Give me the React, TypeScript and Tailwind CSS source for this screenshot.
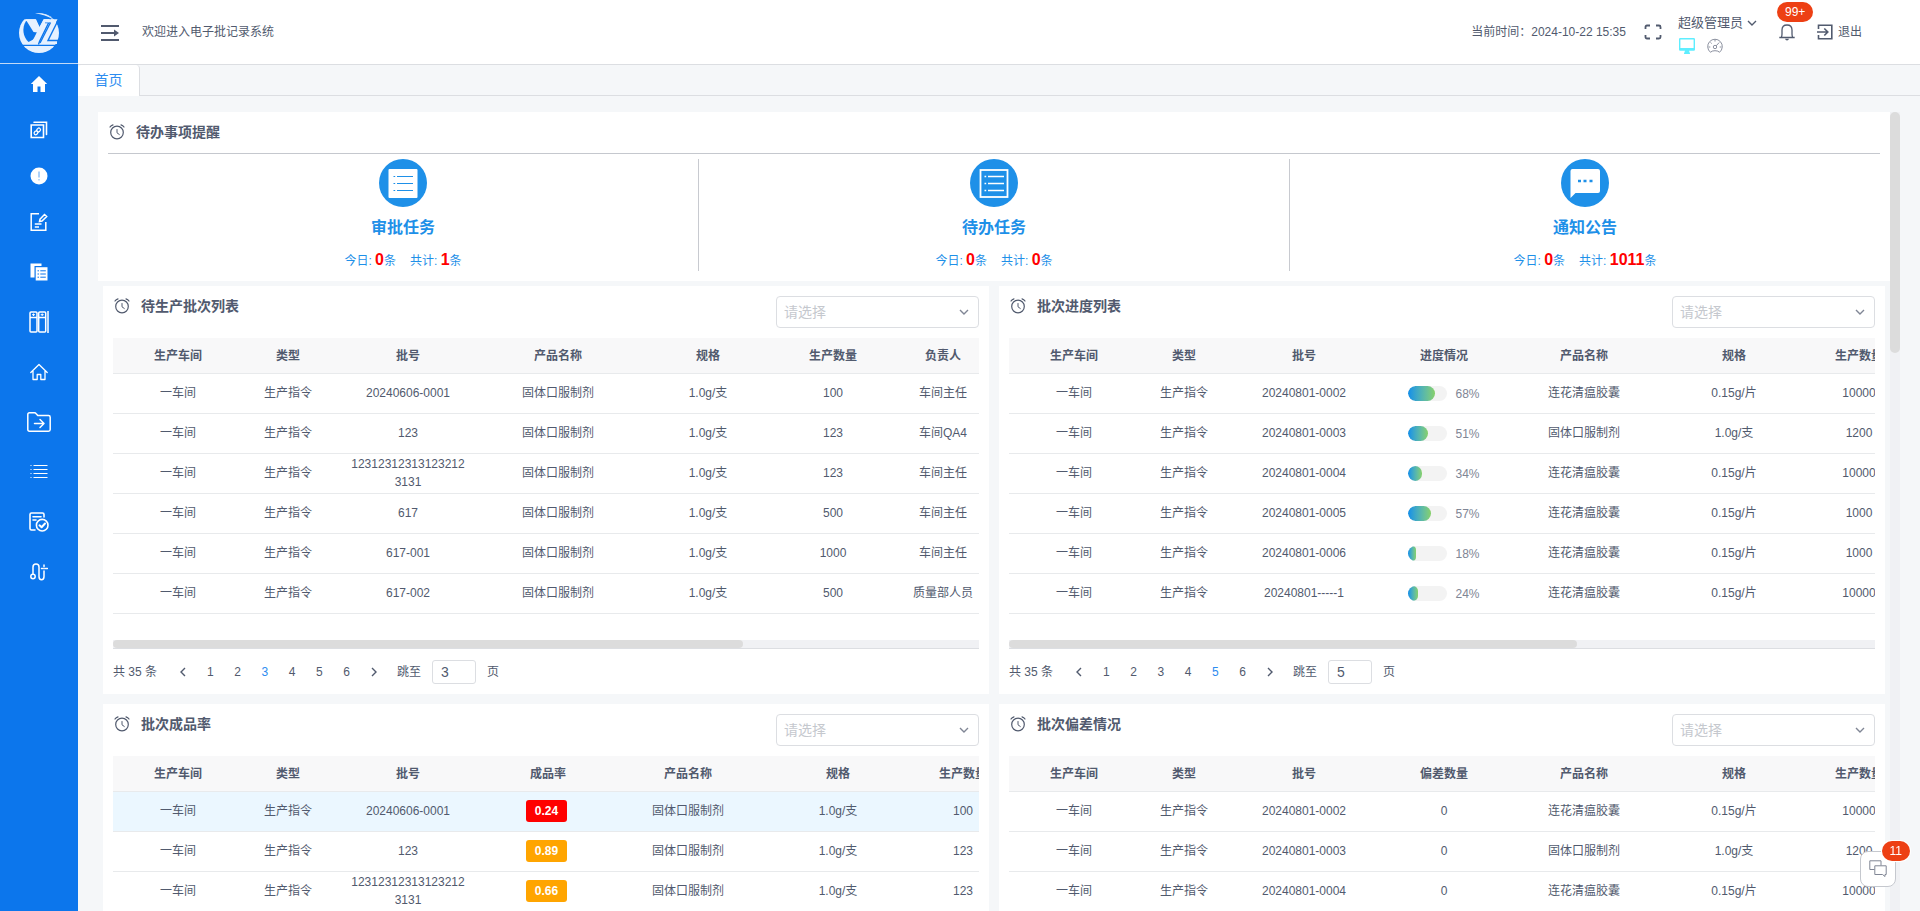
import type { ReactNode } from "react";

type Column = { title: string; width: string };

const W90 = "w-[90px]";
const W100 = "w-[100px]";
const W120 = "w-[120px]";
const W130 = "w-[130px]";
const W150 = "w-[150px]";

/* ---------- icons ---------- */

function Logo() {
  return (
    <svg viewBox="0 0 40 40" className="size-10" aria-hidden="true">
      <circle cx="20" cy="20" r="20" fill="#e6f1ff" />
      <path d="M4 6.300L9 0H16C25 1 32 3.500 35 6.300H25L20.500 14L17 6.300Z" fill="#0c76ec" />
      <path d="M7 8C2.500 15 4 24 9.500 29L15.500 26L18.500 19L12 8.500Z" fill="#0c76ec" />
      <path d="M6.500 6.300H16.500L20.500 14.500L18.500 19.500L14.500 19Z" fill="#e6f1ff" />
      <path d="M24.500 6.300H31L20.500 27.500C19 30.300 17 31 14 31H5C11 30 13.500 28 15.500 24Z" fill="#e6f1ff" />
      <path d="M26 9.500H31M31.500 6L20.500 28.500L19.500 31.500" stroke="#0c76ec" strokeWidth="1.400" fill="none" />
      <path d="M25 6.300H38.500L27.500 28H38V31H21.500L32 9.500H26Z" fill="#e6f1ff" />
      <path d="M39 7.500L29 27.500H39" stroke="#0c76ec" strokeWidth="1.400" fill="none" />
      <path d="M31.500 9.500L21 30" stroke="#0c76ec" strokeWidth="1.400" fill="none" />
      <path d="M3 32.300H37" stroke="#0c76ec" strokeWidth="1.300" fill="none" />
      <path d="M16 .3C24-.2 32 2.500 36.500 8.500L34 6.500C29 3 23 1.300 16 .3Z" fill="#e6f1ff" />
    </svg>
  );
}

function Line({ children, size = "size-[18px]", width = 1.2 }: { children: ReactNode; size?: string; width?: number }) {
  return (
    <svg
      viewBox="0 0 18 18"
      className={size}
      fill="none"
      stroke="currentColor"
      strokeWidth={width}
      strokeLinecap="round"
      strokeLinejoin="round"
      aria-hidden="true"
    >
      {children}
    </svg>
  );
}

const HomeSolid = () => (
  <svg viewBox="0 0 18 18" className="size-[18px]" fill="currentColor" aria-hidden="true">
    <path d="M9 1L.8 9H3V17H7.500V11.500H10.500V17H15V9H17.200Z" />
  </svg>
);
const LinkedPages = () => (
  <Line width={1.6}>
    <path d="M1.200 4H13.500V16.500H1.200ZM4 1.200H16.500V13.500" strokeLinejoin="miter" />
    <rect x="-2.900" y="-1.600" width="4.200" height="3.200" rx="1.600" transform="translate(6.600 11.200) rotate(-45)" strokeWidth="1.200" />
    <rect x="-1.300" y="-1.600" width="4.200" height="3.200" rx="1.600" transform="translate(8 9.600) rotate(-45)" strokeWidth="1.200" />
  </Line>
);
const AlertSolid = () => (
  <svg viewBox="0 0 18 18" className="size-[18px]" aria-hidden="true">
    <circle cx="9" cy="9" r="8.500" fill="currentColor" />
    <path d="M9 4.500V10.500M9 12.200V13.400" stroke="#5aa2f3" strokeWidth="1" />
  </svg>
);
const EditPage = () => (
  <Line width={1.5}>
    <path d="M9 .8H1.200V17.200H15.800V9M9.500 8.500L10 6.200L14.500 1.500L16.700 3.500L12 8L9.500 8.500ZM4.800 11H11.500M4.800 14H9" strokeLinecap="butt" strokeLinejoin="miter" />
  </Line>
);
const CopyList = () => (
  <svg viewBox="0 0 18 18" className="size-[18px]" aria-hidden="true">
    <path d="M.5 .5H11.500V3H4.500V14.500H.5Z" fill="currentColor" />
    <path d="M5.700 4.200H17.500V17.500H5.700Z" fill="currentColor" />
    <path d="M7.500 7.800H9M10.300 7.800H15.800M7.500 11H9M10.300 11H15.800M7.500 14.200H9M10.300 14.200H15.800" stroke="#0c76ec" />
  </svg>
);
const Binders = () => (
  <svg viewBox="0 0 20 22" className="h-[22px] w-5" fill="none" stroke="currentColor" strokeWidth="1.500" aria-hidden="true">
    <rect x="1" y="1" width="7" height="20" rx="1" />
    <rect x="9.700" y="1" width="7" height="20" rx="1" />
    <path d="M19 0V22M1 6.500H8M9.700 6.500H16.700" />
    <path d="M3 3.700H6M11.700 3.700H14.700M4.500 2.500V5M13.200 2.500V5" strokeWidth="1" />
  </svg>
);
const HomeLine = () => (
  <Line width={1.3}>
    <path d="M.8 9.500L9 1.500L17.200 9.500M3 8V16.500H7.200V11.500H10.800V16.500H15V8" />
  </Line>
);
const FolderArrow = () => (
  <svg viewBox="0 0 24 20" className="h-5 w-6" fill="none" stroke="currentColor" strokeWidth="1.500" strokeLinecap="round" strokeLinejoin="round" aria-hidden="true">
    <path d="M2.500 .8H7.500Q8.500 .8 9.200 1.700L10.800 3.600H21.500Q23.200 3.600 23.200 5.300V17.500Q23.200 19.200 21.500 19.200H2.500Q.8 19.200 .8 17.500V2.500Q.8 .8 2.500 .8Z" />
    <path d="M7.500 11.500H17M13 7.500L17 11.500L13 15.500" />
  </svg>
);
const Lines = () => (
  <Line width={1}>
    <path d="M.5 2.500H1.500M3.500 2.500H17.500M.5 6.500H1.500M3.500 6.500H17.500M.5 10.500H1.500M3.500 10.500H17.500M.5 14.500H1.500M3.500 14.500H17.500" strokeLinecap="butt" />
  </Line>
);
const CheckedForm = () => (
  <svg viewBox="0 0 20 20" className="size-5" fill="none" stroke="currentColor" strokeWidth="1.600" strokeLinecap="round" strokeLinejoin="round" aria-hidden="true">
    <path d="M6 18H2.500Q1 18 1 16.500V2.500Q1 1 2.500 1H13.500Q15 1 15 2.500V5M4 4.700H12M4 8H7" />
    <circle cx="13.200" cy="13.200" r="5.800" />
    <path d="M10.500 13.300L12.600 15.200L16 11.500" strokeWidth="2" />
  </svg>
);
const Route = () => (
  <Line width={1.5}>
    <circle cx="3" cy="13.500" r="2.200" />
    <path d="M3 11.200V4Q3 1 6 1Q9 1 9 4V13.500Q9 16.700 11.500 16.700Q14 16.700 14 13.500V8M11.500 5.500H12.500M15.500 5.500H17.500M14 2V3.500M14 5.200V5.800" />
  </Line>
);

const ClockIcon = () => (
  <svg viewBox="0 0 16 16" className="size-4 text-[#515a6e]" fill="none" stroke="currentColor" strokeWidth="1.200" strokeLinecap="round" aria-hidden="true">
    <circle cx="8" cy="8.500" r="6.300" />
    <path d="M8 5.500V8.800L10.300 10.500" strokeWidth="1" />
    <path d="M1 3Q2 1.300 4 .8M15 3Q14 1.300 12 .8" />
  </svg>
);
const Chevron = ({ className }: { className: string }) => (
  <svg viewBox="0 0 10 10" className={className} fill="none" stroke="currentColor" strokeWidth="1.400" aria-hidden="true">
    <path d="M1 3L5 7L9 3" />
  </svg>
);

/* ---------- shell ---------- */

const navTop = [
  { label: "首页", icon: <HomeSolid /> },
  { label: "关联文档", icon: <LinkedPages /> },
  { label: "预警", icon: <AlertSolid /> },
  { label: "编辑", icon: <EditPage /> },
];
const navBottom = [
  { label: "记录", icon: <CopyList /> },
  { label: "档案", icon: <Binders /> },
  { label: "车间", icon: <HomeLine /> },
  { label: "归档", icon: <FolderArrow /> },
  { label: "列表", icon: <Lines /> },
  { label: "审核", icon: <CheckedForm /> },
  { label: "流程", icon: <Route /> },
];

function NavItem({ label, icon }: { label: string; icon: ReactNode }) {
  return (
    <a href="#" aria-label={label} className="flex h-6 w-full items-center justify-center text-white">
      {icon}
    </a>
  );
}

function Sidebar() {
  return (
    <aside className="flex w-[78px] shrink-0 flex-col bg-[#0c76ec]">
      <div className="flex h-16 shrink-0 items-center justify-center border-b border-[#c3daf7] pt-[3px]">
        <Logo />
      </div>
      <nav className="flex flex-col gap-[26px] pt-2">
        <div className="flex flex-col gap-[22px]">
          {navTop.map((n) => (
            <NavItem key={n.label} {...n} />
          ))}
        </div>
        {navBottom.map((n) => (
          <NavItem key={n.label} {...n} />
        ))}
      </nav>
    </aside>
  );
}

function Header() {
  return (
    <header className="flex h-[65px] shrink-0 items-center border-b border-[#dcdee2] bg-white pr-[58px] pl-[23px]">
      <button type="button" aria-label="展开菜单" className="pt-[2px] text-[#515a6e]">
        <svg viewBox="0 0 18 16" className="h-4 w-[18px]" fill="none" stroke="currentColor" strokeWidth="2" aria-hidden="true">
          <path d="M0 1H18M0 8H14M0 15H18" />
          <path d="M13 4.500L18 8L13 11.500Z" fill="currentColor" stroke="none" />
        </svg>
      </button>
      <span className="ml-[23px] text-xs">欢迎进入电子批记录系统</span>
      <span className="ml-auto text-xs">当前时间：2024-10-22 15:35</span>
      <button type="button" aria-label="全屏" className="ml-[18px]">
        <svg viewBox="0 0 18 16" className="h-4 w-[18px]" fill="none" stroke="currentColor" strokeWidth="1.800" aria-hidden="true">
          <path d="M1.500 5V3Q1.500 1.500 3 1.500H6M12 1.500H15Q16.500 1.500 16.500 3V5M16.500 11V13Q16.500 14.500 15 14.500H12M6 14.500H3Q1.500 14.500 1.500 13V11" />
        </svg>
      </button>
      <div className="ml-4 flex flex-col gap-[3px] pt-[5px]">
        <button type="button" className="flex h-5 items-center gap-1 text-[13px]">
          超级管理员
          <Chevron className="size-[10px]" />
        </button>
        <div className="flex h-5 items-center gap-3 pl-px">
          <svg viewBox="0 0 16 16" className="size-4" aria-hidden="true">
            <path fillRule="evenodd" d="M1.200 0H14.800Q16 0 16 1.200V11.500Q16 12.700 14.800 12.700H10L11 15.500V16H5V15.500L6 12.700H1.200Q0 12.700 0 11.500V1.200Q0 0 1.200 0ZM1.400 1.400V10H14.600V1.400Z" fill="#5feeff" />
          </svg>
          <svg viewBox="0 0 16 16" className="size-4 text-[#808695]" fill="none" stroke="currentColor" strokeWidth=".9" aria-hidden="true">
            <path d="M3.500 14.300A7.300 7.300 0 1 1 12.500 14.300Q11.500 12.700 8 12.700Q4.500 12.700 3.500 14.300Z" />
            <circle cx="8" cy="9" r="1.700" />
            <path d="M9.200 7.800L12.200 4.500M8 1.500V3.500M1.500 9H3.300M14.500 9H12.700M3.500 4.500L4.700 5.500" />
          </svg>
        </div>
      </div>
      <button type="button" aria-label="通知" className="relative ml-[22px]">
        <svg viewBox="0 0 16 18" className="h-[18px] w-4" fill="none" stroke="currentColor" strokeWidth="1.300" aria-hidden="true">
          <path d="M.3 14.500H15.700M2.300 14.500Q3 13 3 11V7Q3 2 8 2Q13 2 13 7V11Q13 13 13.700 14.500" />
          <path d="M6 15.800H10Q9.500 17.500 8 17.500Q6.500 17.500 6 15.800Z" fill="currentColor" stroke="none" />
        </svg>
        <span className="absolute bottom-[19px] left-[-2px] flex h-5 items-center rounded-full bg-[#ed4014] px-2 text-xs text-white">99+</span>
      </button>
      <a href="#" className="ml-[22px] flex items-center gap-[5px] text-xs">
        <svg viewBox="0 0 16 16" className="size-4" fill="none" stroke="currentColor" strokeWidth="1.600" aria-hidden="true">
          <path d="M1.500 5V1.200H14.800V14.800H1.500V11M0 8H10.500M7.300 4.500L10.800 8L7.300 11.500" />
        </svg>
        退出
      </a>
    </header>
  );
}

/* ---------- summary ---------- */

function Summary({ title, today, total, icon }: { title: string; today: number; total: number; icon: ReactNode }) {
  return (
    <div className="flex h-[112px] flex-1 flex-col items-center text-[#1e90e8]">
      <svg viewBox="0 0 48 48" className="size-12 shrink-0" fill="none" aria-hidden="true">
        <circle cx="24" cy="24" r="24" fill="#1e90e8" />
        {icon}
      </svg>
      <h3 className="mt-[9px] text-base leading-6 font-bold">{title}</h3>
      <p className="mt-2 flex gap-[14px] text-xs leading-6">
        <span>
          今日: <b className="text-base leading-6 text-[#f00]">{today}</b>条
        </span>
        <span>
          共计: <b className="text-base leading-6 text-[#f00]">{total}</b>条
        </span>
      </p>
    </div>
  );
}

const listRows = "M18 17.500H34M18 24.500H34M18 31.500H34M14.500 17.500H16.200M14.500 24.500H16.200M14.500 31.500H16.200";

function Todo() {
  return (
    <section className="bg-white px-[10px] pb-[10px]">
      <div className="flex h-[42px] items-center gap-[11px] border-b border-[#c5c8ce] pb-[2px] pl-px">
        <ClockIcon />
        <h2 className="text-sm font-bold">待办事项提醒</h2>
      </div>
      <div className="flex divide-x divide-[#c8cad0] pt-[5px]">
        <Summary
          title="审批任务"
          today={0}
          total={1}
          icon={
            <>
              <rect x="9.500" y="10" width="29" height="29" rx="1" fill="#fff" />
              <path d={listRows} stroke="#1e90e8" strokeWidth="1.200" />
            </>
          }
        />
        <Summary
          title="待办任务"
          today={0}
          total={0}
          icon={
            <>
              <rect x="10.500" y="11" width="27" height="27" stroke="#fff" strokeWidth="1.800" />
              <path d={listRows} stroke="#fff" strokeWidth="1.600" />
            </>
          }
        />
        <Summary
          title="通知公告"
          today={0}
          total={1011}
          icon={
            <>
              <path d="M11.500 10H37Q39 10 39 12V32Q39 34 37 34H14.500L9.500 39V12Q9.500 10 11.500 10Z" fill="#fff" />
              <path d="M17 22H20M22.500 22H25.500M28.500 22H31.500" stroke="#1e90e8" strokeWidth="2.600" />
            </>
          }
        />
      </div>
    </section>
  );
}

/* ---------- table panels ---------- */

function Progress({ value }: { value: number }) {
  return (
    <div className="flex items-center justify-center gap-2 pt-[2px] text-[#808695]">
      <div className="h-[15px] w-[39px] overflow-hidden rounded-full bg-[#f3f3f3]">
        <div className="h-full rounded-full bg-linear-to-r from-[#108ee9] to-[#87d068]" style={{ width: `${value}%` }} />
      </div>
      <span>{value}%</span>
    </div>
  );
}

function Rate({ value, tone }: { value: string; tone: "red" | "orange" }) {
  return (
    <div className="flex justify-center pt-px pr-[3px]">
      <span
        className={`flex h-[22px] w-[41px] items-center justify-center rounded-[3px] font-bold text-white ${
          tone === "red" ? "bg-[#ff0000]" : "bg-[#ffa500]"
        }`}
      >
        {value}
      </span>
    </div>
  );
}

type PanelProps = {
  id: string;
  title: string;
  columns: Column[];
  rows: ReactNode[][];
  page: number;
  minWidth: string;
  thumb: number;
  highlight?: number;
};

function Panel({ id, title, columns, rows, page, minWidth, thumb, highlight = -1 }: PanelProps) {
  return (
    <section className="min-w-0 bg-white px-[10px]">
      <div className="flex h-[52px] items-start justify-between pt-[10px]">
        <div className="flex h-5 items-center gap-[11px] pl-px">
          <ClockIcon />
          <h2 className="text-sm leading-5 font-bold">{title}</h2>
        </div>
        <label className="relative block">
          <select
            aria-label={title}
            defaultValue=""
            className="h-8 w-[203px] appearance-none rounded border border-[#dcdee2] bg-white pl-[7px] text-sm text-[#c5c8ce]"
          >
            <option value="">请选择</option>
          </select>
          <Chevron className="pointer-events-none absolute top-[11px] right-[10px] size-[10px] text-[#808695]" />
        </label>
      </div>
      <div className="flex h-[311px] flex-col border-b border-[#dcdee2]">
        <div className="min-h-0 flex-1 overflow-hidden">
          <table className={`w-full table-fixed border-separate border-spacing-0 text-center text-xs ${minWidth}`}>
            <thead>
              <tr>
                {columns.map((c) => (
                  <th key={c.title} className={`h-9 border-b border-[#e8eaec] bg-[#f8f8f9] font-bold ${c.width}`}>
                    {c.title}
                  </th>
                ))}
              </tr>
            </thead>
            <tbody>
              {rows.map((row, r) => (
                <tr key={r} className={r === highlight ? "bg-[#ebf7ff]" : "bg-white"}>
                  {row.map((cell, c) => (
                    <td key={c} className="h-10 border-b border-[#e8eaec] px-[18px] pt-0 pb-[2px] leading-[18px] break-all">
                      {cell}
                    </td>
                  ))}
                </tr>
              ))}
            </tbody>
          </table>
        </div>
        <div className="h-2 shrink-0 bg-[#f0f1f4]">
          <div className="h-full rounded-full bg-[#dcdcdc]" style={{ width: `${thumb}%` }} />
        </div>
      </div>
      <div className="flex h-[45px] items-center text-xs">
        <span className="w-[58px]">共 35 条</span>
        <div className="flex w-[215px] items-center justify-between">
          <button type="button" aria-label="上一页" className="flex w-6 justify-center">
            <Chevron className="size-[10px] rotate-90" />
          </button>
          {[1, 2, 3, 4, 5, 6].map((n) => (
            <button key={n} type="button" className={`h-6 w-6 text-center ${n === page ? "text-[#2d8cf0]" : ""}`}>
              {n}
            </button>
          ))}
          <button type="button" aria-label="下一页" className="flex w-6 justify-center">
            <Chevron className="size-[10px] -rotate-90" />
          </button>
        </div>
        <label htmlFor={id} className="ml-[11px]">
          跳至
        </label>
        <input id={id} type="text" defaultValue={page} className="mx-[11px] h-6 w-11 rounded-[3px] border border-[#dcdee2] px-2 text-sm" />
        <span>页</span>
      </div>
    </section>
  );
}

const base: Column[] = [
  { title: "生产车间", width: W130 },
  { title: "类型", width: W90 },
  { title: "批号", width: W150 },
];
const product: Column[] = [
  { title: "产品名称", width: W150 },
  { title: "规格", width: W150 },
  { title: "生产数量", width: W100 },
];

const A = "一车间";
const B = "生产指令";
const SOLID = "固体口服制剂";
const LOTUS = "连花清瘟胶囊";
const LONG = "123123123131232123131";

export default function App() {
  return (
    <div className="flex h-screen overflow-hidden bg-[#f5f7f9] font-['Liberation_Sans','Noto_Sans_CJK_SC',sans-serif] text-[#515a6e]">
      <Sidebar />
      <div className="flex min-w-0 flex-1 flex-col">
        <Header />
        <div className="flex h-[31px] shrink-0">
          <a href="#" className="flex w-[62px] items-center justify-center rounded-t border-r border-[#dcdee2] bg-white pb-[2px] text-sm text-[#2d8cf0]">
            首页
          </a>
          <div className="flex-1 border-b border-[#dcdee2]" />
        </div>
        <div className="flex min-h-0 flex-1 pt-4 pr-5 pl-5">
          <main className="min-w-0 flex-1 overflow-hidden">
            <Todo />
            <div className="grid grid-cols-2 gap-[10px] p-[5px]">
              <Panel
                id="jump-pending"
                title="待生产批次列表"
                columns={[...base, ...product, { title: "负责人", width: W120 }]}
                minWidth="min-w-[890px]"
                thumb={72.7}
                page={3}
                rows={[
                  [A, B, "20240606-0001", SOLID, "1.0g/支", "100", "车间主任"],
                  [A, B, "123", SOLID, "1.0g/支", "123", "车间QA4"],
                  [A, B, LONG, SOLID, "1.0g/支", "123", "车间主任"],
                  [A, B, "617", SOLID, "1.0g/支", "500", "车间主任"],
                  [A, B, "617-001", SOLID, "1.0g/支", "1000", "车间主任"],
                  [A, B, "617-002", SOLID, "1.0g/支", "500", "质量部人员"],
                ]}
              />
              <Panel
                id="jump-progress"
                title="批次进度列表"
                columns={[...base, { title: "进度情况", width: W130 }, ...product]}
                minWidth="min-w-[900px]"
                thumb={65.6}
                page={5}
                rows={[
                  [A, B, "20240801-0002", <Progress value={68} />, LOTUS, "0.15g/片", "10000"],
                  [A, B, "20240801-0003", <Progress value={51} />, SOLID, "1.0g/支", "1200"],
                  [A, B, "20240801-0004", <Progress value={34} />, LOTUS, "0.15g/片", "10000"],
                  [A, B, "20240801-0005", <Progress value={57} />, LOTUS, "0.15g/片", "1000"],
                  [A, B, "20240801-0006", <Progress value={18} />, LOTUS, "0.15g/片", "1000"],
                  [A, B, "20240801-----1", <Progress value={24} />, LOTUS, "0.15g/片", "10000"],
                ]}
              />
              <Panel
                id="jump-rate"
                title="批次成品率"
                columns={[...base, { title: "成品率", width: W130 }, ...product]}
                minWidth="min-w-[900px]"
                thumb={65.6}
                page={3}
                highlight={0}
                rows={[
                  [A, B, "20240606-0001", <Rate value="0.24" tone="red" />, SOLID, "1.0g/支", "100"],
                  [A, B, "123", <Rate value="0.89" tone="orange" />, SOLID, "1.0g/支", "123"],
                  [A, B, LONG, <Rate value="0.66" tone="orange" />, SOLID, "1.0g/支", "123"],
                ]}
              />
              <Panel
                id="jump-deviation"
                title="批次偏差情况"
                columns={[...base, { title: "偏差数量", width: W130 }, ...product]}
                minWidth="min-w-[900px]"
                thumb={65.6}
                page={5}
                rows={[
                  [A, B, "20240801-0002", "0", LOTUS, "0.15g/片", "10000"],
                  [A, B, "20240801-0003", "0", SOLID, "1.0g/支", "1200"],
                  [A, B, "20240801-0004", "0", LOTUS, "0.15g/片", "10000"],
                ]}
              />
            </div>
          </main>
          <div className="w-[10px] shrink-0 bg-[#f0f1f4]">
            <div className="h-[241px] rounded-full bg-[#dcdcdc]" />
          </div>
        </div>
      </div>
      <button
        type="button"
        aria-label="消息"
        className="fixed right-6 bottom-6 flex size-9 items-center justify-center rounded-lg border border-[#c5c8ce] bg-white text-[#808695]"
      >
        <svg viewBox="0 0 18 18" className="size-[18px]" fill="none" stroke="currentColor" aria-hidden="true">
          <path d="M5.500 9.500H.8V.8H12V5.500M5.800 5.800H17.200V14.500H16V16.500L13.500 14.500H5.800Z" />
        </svg>
        <span className="absolute right-[-15px] bottom-[25px] flex h-5 items-center rounded-full bg-[#ed4014] px-2 text-xs text-white ring-1 ring-white">11</span>
      </button>
    </div>
  );
}
